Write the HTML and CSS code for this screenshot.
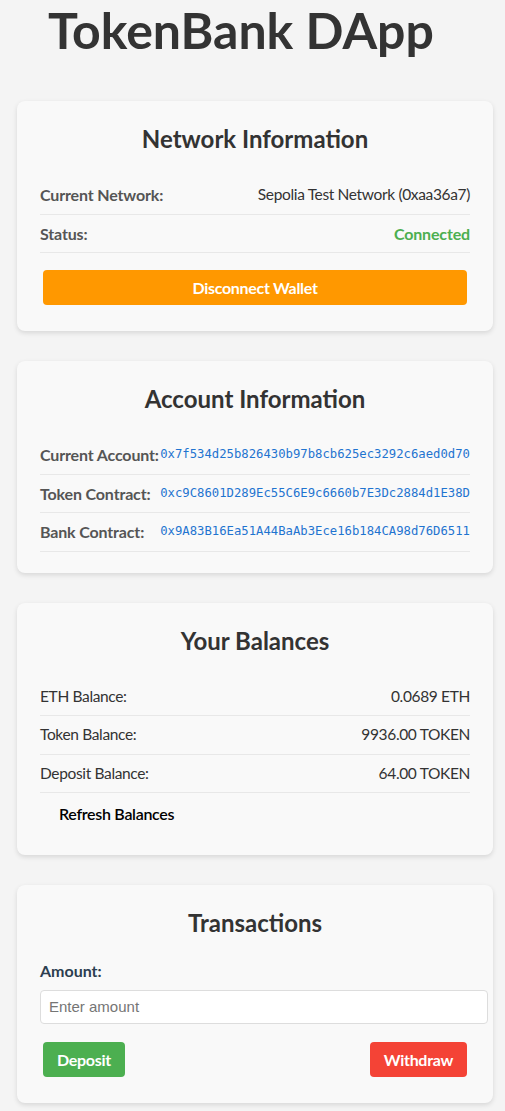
FILE: index.html
```html
<!DOCTYPE html>
<html lang="en">
<head>
<meta charset="utf-8">
<title>TokenBank DApp</title>
<link rel="stylesheet" href="styles.css">
</head>
<body>
<div class="page">
  <header class="header">
    <h1 class="title">TokenBank DApp</h1>
  </header>

  <section class="card">
    <h2 class="card-title">Network Information</h2>
    <div class="row">
      <span class="label">Current Network:</span>
      <span class="value">Sepolia Test Network (0xaa36a7)</span>
    </div>
    <div class="row">
      <span class="label">Status:</span>
      <span class="value status-ok">Connected</span>
    </div>
    <button class="btn btn-orange btn-block">Disconnect Wallet</button>
  </section>

  <section class="card">
    <h2 class="card-title">Account Information</h2>
    <div class="row">
      <span class="label">Current Account:</span>
      <span class="address">0x7f534d25b826430b97b8cb625ec3292c6aed0d70</span>
    </div>
    <div class="row">
      <span class="label">Token Contract:</span>
      <span class="address">0xc9C8601D289Ec55C6E9c6660b7E3Dc2884d1E38D</span>
    </div>
    <div class="row">
      <span class="label">Bank Contract:</span>
      <span class="address">0x9A83B16Ea51A44BaAb3Ece16b184CA98d76D6511</span>
    </div>
  </section>

  <section class="card">
    <h2 class="card-title">Your Balances</h2>
    <div class="row">
      <span class="label-plain">ETH Balance:</span>
      <span class="value">0.0689 ETH</span>
    </div>
    <div class="row">
      <span class="label-plain">Token Balance:</span>
      <span class="value">9936.00 TOKEN</span>
    </div>
    <div class="row">
      <span class="label-plain">Deposit Balance:</span>
      <span class="value">64.00 TOKEN</span>
    </div>
    <div class="refresh-wrap">
      <button class="btn btn-plain">Refresh Balances</button>
    </div>
  </section>

  <section class="card">
    <h2 class="card-title">Transactions</h2>
    <label class="field-label" for="amount">Amount:</label>
    <input class="field-input" id="amount" type="text" placeholder="Enter amount">
    <div class="actions">
      <button class="btn btn-green">Deposit</button>
      <button class="btn btn-red">Withdraw</button>
    </div>
  </section>
</div>
</body>
</html>
```

FILE: styles.css
```css
* {
  box-sizing: border-box;
}

html, body {
  margin: 0;
  padding: 0;
}

body {
  background: #f4f4f4;
  color: #333;
  font-family: "Segoe UI", Lato, "Noto Sans", sans-serif;
  font-size: 16px;
}

.page {
  margin: 0 12px 0 17px;
  padding-bottom: 8px;
}

.header {
  padding-left: 31px;
  height: 101px;
}

.title {
  margin: 0;
  font-size: 50px;
  line-height: 60px;
  font-weight: 700;
  color: #333;
}

.card {
  background: #f9f9f9;
  border-radius: 8px;
  box-shadow: 0 2px 5px rgba(0, 0, 0, 0.12);
  padding: 22px 23px 21px;
  margin-bottom: 30px;
}

.card:last-child {
  margin-bottom: 0;
}

.card-title {
  margin: 0 0 21px;
  text-align: center;
  font-size: 24px;
  line-height: 32px;
  font-weight: 700;
  color: #333;
}

.row {
  display: flex;
  justify-content: space-between;
  padding: 8px 0;
  line-height: 21.5px;
  border-bottom: 1px solid #e8e8e8;
}

.label {
  font-weight: 700;
  color: #555;
  letter-spacing: -0.15px;
  white-space: nowrap;
}

.label-plain {
  color: #333;
  font-size: 15.5px;
  letter-spacing: -0.35px;
}

.value {
  color: #333;
  font-size: 15.5px;
  letter-spacing: -0.35px;
  text-align: right;
}

.status-ok {
  color: #4caf50;
  font-size: 16px;
  font-weight: 700;
  letter-spacing: -0.15px;
}

.address {
  font-family: "DejaVu Sans Mono", "Liberation Mono", monospace;
  font-size: 12.25px;
  color: #1f74d0;
  white-space: nowrap;
}

.btn {
  border: none;
  border-radius: 4px;
  padding: 8px 14px;
  font-family: inherit;
  font-size: 16px;
  line-height: 19px;
  font-weight: 700;
  letter-spacing: -0.3px;
  color: #fff;
  margin: 0 3px 5px;
  cursor: pointer;
}

.btn-block {
  display: block;
  width: calc(100% - 6px);
  margin-top: 17px;
}

.btn-orange {
  background: #ff9800;
}

.btn-green {
  background: #4caf50;
}

.btn-red {
  background: #f44336;
}

.refresh-wrap {
  padding-top: 3px;
}

.btn-plain {
  background: transparent;
  color: #000;
  font-weight: 600;
  padding: 8px 16px;
  margin-bottom: 3px;
}

.field-label {
  display: block;
  font-weight: 700;
  line-height: 21px;
  color: #2c3e50;
  margin-bottom: 9px;
}

.field-input {
  display: block;
  box-sizing: content-box;
  width: 100%;
  padding: 8px;
  border: 1px solid #ddd;
  border-radius: 4px;
  background: #fff;
  font-family: "Liberation Sans", Arial, sans-serif;
  font-size: 15px;
  line-height: 16px;
  height: 16px;
  color: #333;
}

.field-input::placeholder {
  color: #757575;
}

.actions {
  display: flex;
  justify-content: space-between;
  margin-top: 18px;
}
```
